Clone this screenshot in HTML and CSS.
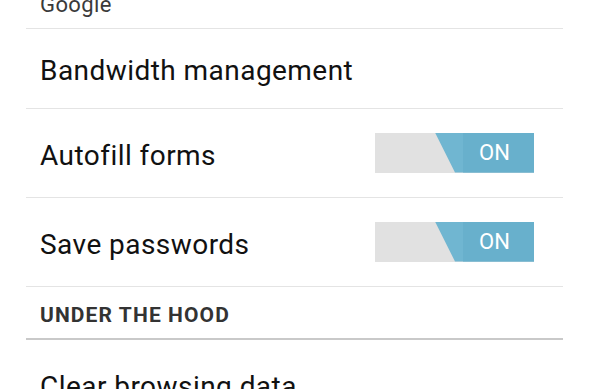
FILE: index.html
```html
<!DOCTYPE html>
<html>
<head>
<meta charset="utf-8">
<link rel="stylesheet" href="styles.css">
</head>
<body>
<div class="list">
  <div class="row row-top"><span class="summary">Google</span></div>
  <div class="row row-short"><span class="title">Bandwidth management</span></div>
  <div class="row row-tall">
    <span class="title">Autofill forms</span>
    <div class="toggle"><div class="toggle-on"><span class="on-label">ON</span></div></div>
  </div>
  <div class="row row-tall">
    <span class="title">Save passwords</span>
    <div class="toggle"><div class="toggle-on"><span class="on-label">ON</span></div></div>
  </div>
  <div class="section">UNDER THE HOOD</div>
  <div class="row row-tall row-last"><span class="title">Clear browsing data</span></div>
</div>
</body>
</html>
```

FILE: styles.css
```css
html, body {
  margin: 0;
  padding: 0;
  background: #ffffff;
  overflow: hidden;
}
body {
  width: 590px;
  height: 389px;
  font-family: Roboto, "Noto Sans", sans-serif;
  color: #111;
}
.list {
  margin: 0 27px 0 26px;
  display: flex;
  flex-direction: column;
}
.row {
  display: flex;
  align-items: center;
  justify-content: space-between;
  padding-left: 14px;
  border-bottom: 1px solid #e4e4e4;
  box-sizing: border-box;
}
.row-top {
  height: 29px;
  align-items: flex-end;
  overflow: hidden;
}
.summary {
  font-size: 22px;
  letter-spacing: 0.4px;
  color: #3a3a3a;
  line-height: 26px;
  margin-bottom: 10px;
}
.row-short {
  height: 80px;
  padding-top: 4px;
}
.row-tall {
  height: 89px;
  padding-top: 4px;
}
.row-tall .toggle {
  margin-top: -5px;
}
.title {
  font-size: 28px;
  letter-spacing: 0.45px;
  color: #111;
}
.row-last {
  border-bottom: none;
  align-items: flex-start;
  padding-top: 30px;
}
.section {
  height: 53px;
  box-sizing: border-box;
  padding: 16px 0 0 14px;
  font-size: 21px;
  letter-spacing: 1.1px;
  font-weight: bold;
  color: #333;
  border-bottom: 2px solid #c9c9c9;
}
.toggle {
  width: 159px;
  height: 40px;
  margin-right: 29px;
  background: #e1e1e1;
  display: flex;
  justify-content: flex-end;
}
.toggle-on {
  width: 99px;
  height: 100%;
  background: #70b6d1;
  clip-path: polygon(0 0, 100% 0, 100% 100%, 20px 100%);
  display: flex;
  justify-content: flex-end;
}
.on-label {
  width: 71px;
  height: 100%;
  background: #68b0cc;
  color: #fff;
  font-size: 22px;
  display: flex;
  align-items: center;
  justify-content: center;
  padding-right: 8px;
  box-sizing: border-box;
}
```
